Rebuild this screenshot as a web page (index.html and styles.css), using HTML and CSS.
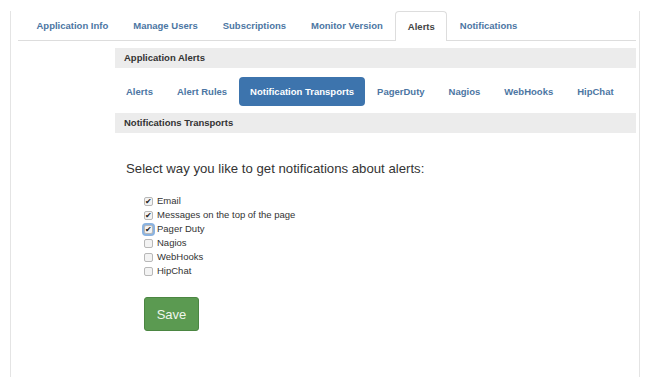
FILE: index.html
```html
<!DOCTYPE html>
<html lang="en">
<head>
  <meta charset="UTF-8" />
  <title>Alerts - Notification Transports</title>
  <link rel="stylesheet" href="styles.css">
</head>
<body>
  <div class="panel">
    <ul class="tabs">
      <li><a href="#">Application Info</a></li>
      <li><a href="#">Manage Users</a></li>
      <li><a href="#">Subscriptions</a></li>
      <li><a href="#">Monitor Version</a></li>
      <li class="active"><a href="#">Alerts</a></li>
      <li><a href="#">Notifications</a></li>
    </ul>

    <div class="tab-content">
      <div class="section-title">Application Alerts</div>

      <ul class="pills">
        <li><a href="#">Alerts</a></li>
        <li><a href="#">Alert Rules</a></li>
        <li class="active"><a href="#">Notification Transports</a></li>
        <li><a href="#">PagerDuty</a></li>
        <li><a href="#">Nagios</a></li>
        <li><a href="#">WebHooks</a></li>
        <li><a href="#">HipChat</a></li>
      </ul>

      <div class="section-title">Notifications Transports</div>

      <form class="transports">
        <p class="lead">Select way you like to get notifications about alerts:</p>

        <div class="checks">
          <label><input type="checkbox" checked> Email</label>
          <label><input type="checkbox" checked> Messages on the top of the page</label>
          <label><input type="checkbox" class="focused" checked> Pager Duty</label>
          <label><input type="checkbox"> Nagios</label>
          <label><input type="checkbox"> WebHooks</label>
          <label><input type="checkbox"> HipChat</label>
        </div>

        <button type="button" class="btn-save">Save</button>
      </form>
    </div>
  </div>
</body>
</html>
```

FILE: styles.css
```css
body {
  margin: 0;
  background: #fff;
  font-family: 'Liberation Sans', Arial, sans-serif;
  color: #333;
}
.panel {
  width: 630px;
  height: 370px;
  margin-left: 10px;
  border: 1px solid #e4e4e4;
  border-top: none;
  padding: 0 3px 0 7px;
  box-sizing: border-box;
}
ul {
  list-style: none;
  margin: 0;
  padding: 0;
}
a {
  text-decoration: none;
  white-space: nowrap;
}
.tabs {
  display: flex;
  margin-top: 11px;
  padding-left: 6px;
  border-bottom: 1px solid #ddd;
}
.tabs li a {
  display: block;
  padding: 0 11.5px;
  line-height: 28px;
  font-size: 9.5px;
  font-weight: bold;
  color: #4c76a3;
  border: 1px solid transparent;
  border-bottom: none;
  border-radius: 4px 4px 0 0;
  margin-bottom: -1px;
}
.tabs li.active a {
  color: #444;
  background: #fff;
  border-color: #ddd;
  line-height: 29px;
}
.tab-content {
  margin-left: 97px;
  padding-top: 7px;
}
.section-title {
  background: #ececec;
  font-size: 9.5px;
  font-weight: bold;
  color: #333;
  line-height: 20px;
  padding: 0 9px;
}
.pills {
  display: flex;
  margin: 9px 0 7px;
}
.pills li a {
  display: block;
  padding: 0 12px;
  line-height: 29px;
  font-size: 9.5px;
  font-weight: bold;
  color: #4c76a3;
  border-radius: 4px;
}
.pills li:first-child a {
  padding-left: 11px;
}
.pills li.active a {
  background: #3d74ad;
  color: #fff;
  padding: 0 11px;
}
.transports {
  padding: 27px 0 0 11px;
}
.lead {
  margin: 0;
  font-size: 13.2px;
  line-height: 18px;
  color: #333;
}
.checks {
  margin: 16px 0 0 18px;
  display: flex;
  flex-direction: column;
}
.checks label {
  display: flex;
  align-items: center;
  gap: 4px;
  font-size: 9.5px;
  line-height: 14px;
  color: #333;
}
.checks input {
  appearance: none;
  -webkit-appearance: none;
  width: 9px;
  height: 9px;
  margin: 0;
  border: 1px solid #b8b8b8;
  border-radius: 2px;
  background: #f3f3f3;
  position: relative;
}
.checks input:checked::before {
  content: '✔';
  position: absolute;
  left: 0;
  top: -2px;
  font-size: 8px;
  line-height: 11px;
  color: #222;
}
.checks input.focused {
  box-shadow: 0 0 0 2px #8bb3e0;
}
.btn-save {
  margin: 19px 0 0 18px;
  width: 55px;
  height: 34px;
  background: #5b9a51;
  border: 1px solid #4b8642;
  border-radius: 3px;
  color: #eef6ec;
  font-family: 'Liberation Sans', Arial, sans-serif;
  font-size: 13px;
  padding: 0;
}
```
